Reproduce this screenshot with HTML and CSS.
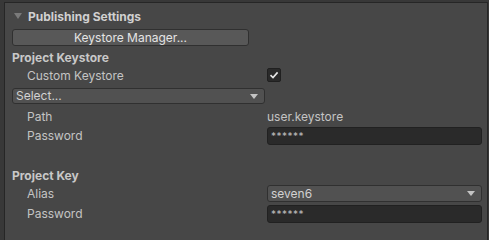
FILE: index.html
```html
<!DOCTYPE html>
<html lang="en">
<head>
    <meta charset="UTF-8">
    <title>Publishing Settings</title>
    <link rel="stylesheet" href="styles.css">
</head>
<body>

<section class="panel">

  <div class="row header">
    <span class="fold"></span>
    <span class="title">Publishing Settings</span>
  </div>

  <div class="row btnrow">
    <button class="button">Keystore Manager...</button>
  </div>

  <div class="row heading gap">Project Keystore</div>

  <div class="row">
    <span class="label">Custom Keystore</span>
    <span class="value"><span class="check">
      <svg width="10" height="10" viewBox="0 0 10 10"><path d="M1.5 5.2 L4 7.6 L8.6 2.4" fill="none" stroke="#e6e6e6" stroke-width="1.6"/></svg>
    </span></span>
  </div>

  <div class="row gap">
    <div class="popup wide">Select...<span class="arrow"></span></div>
  </div>

  <div class="row pathrow">
    <span class="label">Path</span>
    <span class="value">user.keystore</span>
  </div>

  <div class="row pwrow">
    <span class="label">Password</span>
    <span class="value"><span class="field">******</span></span>
  </div>

  <div class="spacer"></div>

  <div class="row heading">Project Key</div>

  <div class="row">
    <span class="label">Alias</span>
    <span class="value"><span class="popup">seven6<span class="arrow"></span></span></span>
  </div>

  <div class="row gap">
    <span class="label">Password</span>
    <span class="value"><span class="field">******</span></span>
  </div>

</section>

</body>
</html>
```

FILE: styles.css
```css
html{
  box-sizing: border-box;
}
*, *:before, *:after{
  box-sizing: inherit;
}
body{
  margin: 0;
  background-color: #383838;
  font-family: Inter, 'Noto Sans', sans-serif;
  font-size: 12px;
  color: #c4c4c4;
  overflow: hidden;
}

.panel{
  margin: 2px 1px 0 4px;
  height: 238px;
  background-color: #474747;
  border: 1px solid #262626;
  border-bottom: none;
  padding: 4px 5px 0 7px;
}

.row{
  display: flex;
  align-items: center;
  height: 18px;
}
.gap{
  margin-top: 2px;
}

/* foldout header */
.header .fold{
  width: 0;
  height: 0;
  margin: 0 6px 0 2px;
  border-left: 4px solid transparent;
  border-right: 4px solid transparent;
  border-top: 6px solid #7a7a7a;
}
.header .title{
  font-weight: 700;
  color: #d0d0d0;
}

.btnrow{
  margin-top: 3px;
}
.button{
  width: 237px;
  height: 17px;
  margin-top: 1px;
  padding: 0;
  font-family: inherit;
  font-size: 12px;
  color: #e4e4e4;
  background-color: #585858;
  border: 1px solid #303030;
  border-radius: 3px;
}

.heading{
  font-weight: 700;
  color: #c8c8c8;
}

.label{
  width: 255px;
  padding-left: 15px;
}
.value{
  flex: 1;
  display: flex;
  align-items: center;
}

.check{
  width: 14px;
  height: 14px;
  background-color: #2a2a2a;
  border: 1px solid #202020;
  border-radius: 2px;
  display: flex;
  align-items: center;
  justify-content: center;
}

.popup{
  position: relative;
  flex: 1;
  height: 17px;
  margin-top: 1px;
  padding-left: 3px;
  line-height: 15px;
  color: #d2d2d2;
  background-color: #515151;
  border: 1px solid #303030;
  border-radius: 3px;
}
.popup.wide{
  flex: none;
  width: 253px;
  height: 16px;
  line-height: 14px;
}
.arrow{
  position: absolute;
  right: 6px;
  top: 5px;
  width: 0;
  height: 0;
  border-left: 4px solid transparent;
  border-right: 4px solid transparent;
  border-top: 5px solid #c4c4c4;
}

.pathrow{
  margin-top: 3px;
}
.pwrow{
  margin-top: 1px;
}

.field{
  flex: 1;
  height: 18px;
  margin-top: 1px;
  padding-left: 3px;
  line-height: 16px;
  font-size: 10px;
  letter-spacing: 0.5px;
  color: #bdbdbd;
  background-color: #2a2a2a;
  border: 1px solid #212121;
  border-radius: 3px;
}

.spacer{
  height: 22px;
}
```
